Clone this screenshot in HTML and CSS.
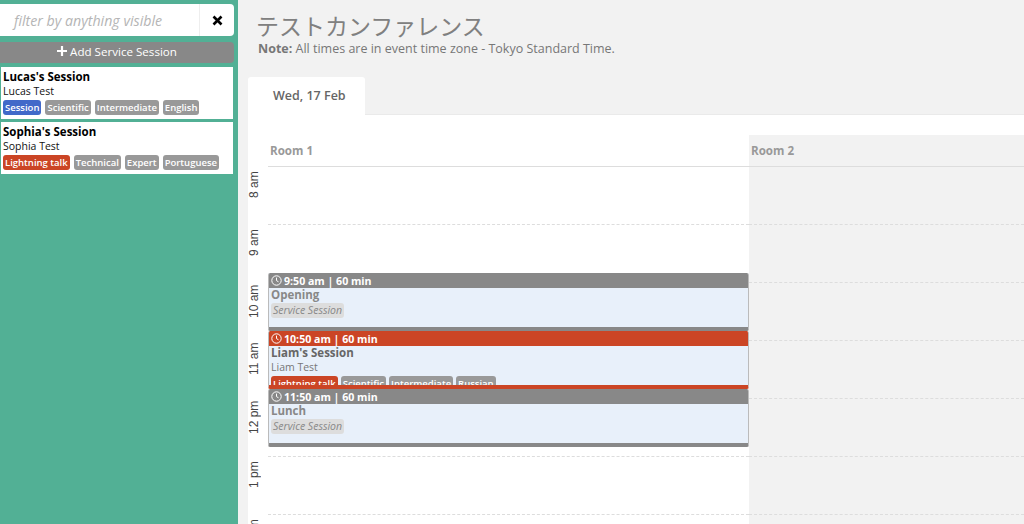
FILE: index.html
```html
<!DOCTYPE html>
<html lang="en">
<head>
    <meta charset="UTF-8">
    <meta name="viewport" content="width=device-width, initial-scale=1.0">
    <title>Schedule</title>
    <link rel="stylesheet" href="styles.css">
</head>
<body>
    <aside class="sidebar">
        <div class="filter">
            <div class="filter-input">filter by anything visible</div>
            <div class="filter-clear">
                <svg width="11" height="11" viewBox="0 0 11 11"><path d="M1.5 1.5l8 8M9.5 1.5l-8 8" stroke="#000" stroke-width="2.6" fill="none"/></svg>
            </div>
        </div>
        <div class="add-btn">
            <svg width="10" height="10" viewBox="0 0 10 10"><path d="M5 0v10M0 5h10" stroke="#fff" stroke-width="2.2" fill="none"/></svg>
            Add Service Session
        </div>
        <div class="card">
            <div class="card-title">Lucas's Session</div>
            <div class="card-speaker">Lucas Test</div>
            <div class="tags">
                <span class="tag tag-blue">Session</span><span class="tag">Scientific</span><span class="tag">Intermediate</span><span class="tag">English</span>
            </div>
        </div>
        <div class="card">
            <div class="card-title">Sophia's Session</div>
            <div class="card-speaker">Sophia Test</div>
            <div class="tags">
                <span class="tag tag-red">Lightning talk</span><span class="tag">Technical</span><span class="tag">Expert</span><span class="tag">Portuguese</span>
            </div>
        </div>
    </aside>

    <main class="main">
        <h1 class="title">テストカンファレンス</h1>
        <p class="note"><b>Note:</b> All times are in event time zone - Tokyo Standard Time.</p>

        <div class="tab-bar">
            <div class="tab">Wed, 17 Feb</div>
        </div>

        <div class="panel">
            <div class="times">
                <div class="time"><span>8 am</span></div>
                <div class="time"><span>9 am</span></div>
                <div class="time"><span>10 am</span></div>
                <div class="time"><span>11 am</span></div>
                <div class="time"><span>12 pm</span></div>
                <div class="time"><span>1 pm</span></div>
                <div class="time"><span>2 pm</span></div>
            </div>

            <div class="room room-active">
                <div class="room-name">Room 1</div>
                <div class="lane">
                    <div class="hour"></div><div class="hour"></div><div class="hour"></div><div class="hour"></div><div class="hour"></div><div class="hour"></div><div class="hour"></div>

                    <div class="event event-9">
                        <div class="event-time">
                            <svg class="clock" viewBox="0 0 11 11"><circle cx="5.5" cy="5.5" r="4.7"/><path d="M5.5 2.6v3l2 1.2"/></svg>
                            9:50 am | 60 min
                        </div>
                        <div class="event-body">
                            <div class="event-title">Opening</div>
                            <span class="tag tag-service">Service Session</span>
                        </div>
                    </div>

                    <div class="event event-10 event-red">
                        <div class="event-time">
                            <svg class="clock" viewBox="0 0 11 11"><circle cx="5.5" cy="5.5" r="4.7"/><path d="M5.5 2.6v3l2 1.2"/></svg>
                            10:50 am | 60 min
                        </div>
                        <div class="event-body">
                            <div class="event-title">Liam's Session</div>
                            <div class="event-speaker">Liam Test</div>
                            <div class="tags">
                                <span class="tag tag-red">Lightning talk</span><span class="tag">Scientific</span><span class="tag">Intermediate</span><span class="tag">Russian</span>
                            </div>
                        </div>
                    </div>

                    <div class="event event-11">
                        <div class="event-time">
                            <svg class="clock" viewBox="0 0 11 11"><circle cx="5.5" cy="5.5" r="4.7"/><path d="M5.5 2.6v3l2 1.2"/></svg>
                            11:50 am | 60 min
                        </div>
                        <div class="event-body">
                            <div class="event-title">Lunch</div>
                            <span class="tag tag-service">Service Session</span>
                        </div>
                    </div>
                </div>
            </div>

            <div class="room room-off">
                <div class="room-name">Room 2</div>
                <div class="lane">
                    <div class="hour"></div><div class="hour"></div><div class="hour"></div><div class="hour"></div><div class="hour"></div><div class="hour"></div><div class="hour"></div>
                </div>
            </div>
        </div>
    </main>
</body>
</html>
```

FILE: styles.css
```css
html, body {
    height: 100%;
    overflow: hidden;
}
body {
    margin: 0;
    display: flex;
    font-family: "Open Sans", "Noto Sans CJK JP", sans-serif;
    background-color: #f2f2f2;
}

/* left column */
.sidebar {
    width: 238px;
    flex: none;
    box-sizing: border-box;
    padding: 4px 4px 0 0;
    background-color: #52b095;
}
.filter {
    display: flex;
    height: 32px;
    background-color: #fff;
    border-radius: 0 4px 4px 0;
}
.filter-input {
    flex: 1;
    padding-left: 14px;
    line-height: 33px;
    font-size: 14.2px;
    font-style: italic;
    color: #b5b5b5;
}
.filter-clear {
    width: 34px;
    display: flex;
    align-items: center;
    justify-content: center;
    border-left: 1px solid #eee;
}
.add-btn {
    margin-top: 6px;
    height: 21px;
    line-height: 20px;
    text-align: center;
    font-size: 11.6px;
    color: #fff;
    background-color: #888;
    border-radius: 0 4px 4px 0;
}
.card {
    height: 52px;
    box-sizing: border-box;
    margin: 4px 1px -1px 1px;
    padding: 3px 1px 0 2px;
    background-color: #fff;
}
.card-title {
    font-size: 11.5px;
    font-weight: 700;
    line-height: 14px;
    color: #000;
}
.card-speaker {
    font-size: 10.5px;
    line-height: 14px;
    color: #111;
}
.tags {
    display: flex;
    gap: 3px;
    margin-top: 2px;
}
.card .tags {
    gap: 4px;
}
.tag {
    display: block;
    padding: 0 2px;
    height: 15px;
    line-height: 15px;
    font-size: 9.5px;
    font-weight: 600;
    color: #fff;
    background-color: #999;
    border-radius: 3px;
}
.tag-blue {
    background-color: #4169c9;
}
.tag-red {
    background-color: #cb4525;
}
.tag-service {
    width: fit-content;
    font-size: 10.5px;
    font-weight: 400;
    font-style: italic;
    color: #888;
    background-color: #ddd;
}

/* right column */
.main {
    flex: 1;
    min-width: 0;
    padding-left: 10px;
}
.title {
    margin: 11px 0 2px 8px;
    font-family: "Noto Sans CJK JP", sans-serif;
    font-size: 23px;
    font-weight: 400;
    line-height: 28px;
    color: #808080;
}
.note {
    margin: 0 0 0 10px;
    font-size: 12.5px;
    line-height: 16px;
    color: #777;
}
.tab-bar {
    display: flex;
    margin-top: 20px;
}
.tab {
    width: 117px;
    height: 38px;
    box-sizing: border-box;
    padding-left: 25px;
    line-height: 38px;
    font-size: 12.5px;
    font-weight: 600;
    color: #666;
    background-color: #fff;
    border-radius: 3px 3px 0 0;
}
.panel {
    display: flex;
    height: 500px;
    padding-top: 20px;
    background-color: #fff;
    border-top: 1px solid #eaeaea;
    margin-top: -1px;
}
.times {
    width: 20px;
    flex: none;
    padding-top: 32px;
}
.time {
    height: 58px;
}
.time span {
    width: 11px;
    height: 36px;
    display: flex;
    align-items: center;
    justify-content: center;
    writing-mode: vertical-rl;
    transform: rotate(180deg);
    font-family: "Liberation Sans", sans-serif;
    font-size: 12px;
    color: #444;
}
.room-active {
    width: 481px;
    flex: none;
}
.room-off {
    flex: 1;
    background-color: #f2f2f2;
}
.room-name {
    height: 31px;
    line-height: 32px;
    padding-left: 2px;
    font-size: 11.6px;
    font-weight: 700;
    color: #999;
    border-bottom: 1px solid #ddd;
}
.lane {
    position: relative;
}
.hour {
    height: 58px;
    box-sizing: border-box;
    border-bottom: 1px dashed #ddd;
}

/* events sit on the time grid */
.event {
    position: absolute;
    left: 0;
    right: 0;
    height: 58px;
    box-sizing: border-box;
    overflow: hidden;
    background-color: #e8f0fa;
    border: 1px solid #bbb;
    border-top: 0;
    border-bottom: 4px solid #888;
    border-radius: 2px;
}
.event-9 {
    top: 106px;
}
.event-10 {
    top: 164px;
}
.event-11 {
    top: 222px;
}
.event-red {
    border-bottom-color: #cb4525;
}
.event-time {
    display: flex;
    align-items: center;
    gap: 2px;
    height: 15px;
    padding-left: 2px;
    font-size: 10.6px;
    font-weight: 700;
    color: #fff;
    background-color: #888;
}
.event-red .event-time {
    background-color: #cb4525;
}
.clock {
    width: 11px;
    height: 11px;
    fill: none;
    stroke: #fff;
    stroke-width: 1;
}
.event-body {
    padding-left: 2px;
}
.event-title {
    font-size: 11.5px;
    font-weight: 700;
    line-height: 14px;
    color: #888;
}
.event-red .event-title {
    color: #666;
}
.event-speaker {
    font-size: 10.5px;
    line-height: 14px;
    color: #777;
}
.event-body .tag-service {
    margin-top: 1px;
}
```
